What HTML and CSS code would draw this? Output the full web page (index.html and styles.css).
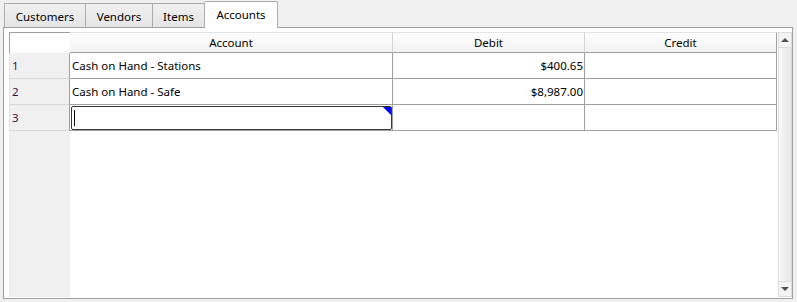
FILE: index.html
```html
<!DOCTYPE html>
<html lang="en">
<head>
<meta charset="utf-8">
<title>Accounts</title>
<link rel="stylesheet" href="styles.css">
</head>
<body>
<div class="window">
  <div class="tabstrip">
    <div class="tab tab-customers">Customers</div>
    <div class="tab tab-vendors">Vendors</div>
    <div class="tab tab-items">Items</div>
    <div class="tab tab-accounts selected">Accounts</div>
  </div>
  <div class="pane">
    <div class="grid">
      <div class="corner"></div>
      <div class="colhead">Account</div>
      <div class="colhead">Debit</div>
      <div class="colhead last">Credit</div>

      <div class="rowhead">1</div>
      <div class="cell">Cash on Hand - Stations</div>
      <div class="cell num">$400.65</div>
      <div class="cell"></div>

      <div class="rowhead">2</div>
      <div class="cell">Cash on Hand - Safe</div>
      <div class="cell num">$8,987.00</div>
      <div class="cell"></div>

      <div class="rowhead">3</div>
      <div class="cell editing"><div class="editor"><span class="caret"></span><span class="corner-mark"></span></div></div>
      <div class="cell"></div>
      <div class="cell"></div>

      <div class="rowfill"></div>
      <div class="emptyfill"></div>
    </div>
    <div class="vscroll">
      <div class="sbtn up"><span class="arrow-up"></span></div>
      <div class="track"></div>
      <div class="sbtn down"><span class="arrow-down"></span></div>
    </div>
  </div>
</div>
</body>
</html>
```
FILE: styles.css
```css
html, body {
  margin: 0;
  padding: 0;
  background: #f0f0f0;
}
body {
  width: 797px;
  height: 302px;
  overflow: hidden;
  font-family: "Segoe UI", "Noto Sans", sans-serif;
  font-size: 11.5px;
  color: #000;
}
.window {
  padding-left: 3px;
}
.tabstrip {
  display: flex;
  align-items: flex-end;
  height: 27px;
  padding-left: 1px;
}
.tab {
  box-sizing: border-box;
  height: 24px;
  border: 1px solid #acacac;
  border-bottom: none;
  margin-left: -1px;
  background: linear-gradient(#f0f0f0, #e5e5e5);
  display: flex;
  align-items: center;
  justify-content: center;
  padding-top: 1px;
  color: #000;
}
.tab:first-child { margin-left: 0; }
.tab-customers { width: 82px; }
.tab-vendors { width: 68px; }
.tab-items { width: 53px; }
.tab-accounts { width: 74px; }
.tab.selected {
  position: relative;
  z-index: 1;
  height: 27px;
  margin-bottom: -1px;
  background: #fff;
  padding-top: 0;
  padding-bottom: 2px;
  border-radius: 2px 2px 0 0;
}
.pane {
  box-sizing: border-box;
  width: 790px;
  height: 272px;
  border: 1px solid #a0a0a0;
  background: #fff;
  padding: 4px 0 0 5px;
  display: flex;
}
.grid {
  display: grid;
  grid-template-columns: 61px 323px 192px 192px;
  grid-template-rows: 21px 26px 26px 26px 1fr;
  height: 265px;
}
.corner {
  border-top: 1px solid #a0a0a0;
  border-left: 1px solid #a0a0a0;
  background: #fff;
}
.colhead {
  box-sizing: border-box;
  background: linear-gradient(#fefefe, #f2f2f2);
  border-top: 1px solid #e3e3e3;
  border-bottom: 1px solid #a0a0a0;
  border-right: 1px solid #d5d5d5;
  display: flex;
  align-items: center;
  justify-content: center;
  padding-bottom: 1px;
}
.colhead.last { border-right-color: #a0a0a0; }
.rowhead {
  box-sizing: border-box;
  background: #f0f0f0;
  border-left: 1px solid #e2e2e2;
  border-bottom: 1px solid #d8d8d8;
  border-right: 1px solid #a0a0a0;
  color: #3e1050;
  padding-left: 2px;
  display: flex;
  align-items: center;
}
.cell {
  box-sizing: border-box;
  border-right: 1px solid #a0a0a0;
  border-bottom: 1px solid #a0a0a0;
  padding: 0 2px;
  display: flex;
  align-items: center;
  white-space: nowrap;
}
.cell.num {
  justify-content: flex-end;
  padding-right: 1px;
}
.cell.editing {
  padding: 0 0 0 1px;
  align-items: stretch;
}
.editor {
  position: relative;
  flex: 1;
  box-sizing: border-box;
  border: 1px solid #383838;
  border-radius: 2px;
  background: #fff;
  margin-top: 1px;
  display: flex;
  align-items: center;
  padding-left: 2px;
}
.caret {
  width: 1px;
  height: 16px;
  background: #000;
}
.corner-mark {
  position: absolute;
  top: 0;
  right: 0;
  width: 0;
  height: 0;
  border-top: 8px solid #0000f0;
  border-left: 8px solid transparent;
}
.rowfill {
  background: #f0f0f0;
  border-left: 1px solid #f0f0f0;
}
.emptyfill {
  grid-column: 2 / 5;
  background: #fff;
}
.vscroll {
  box-sizing: border-box;
  width: 15px;
  height: 265px;
  margin-left: 1px;
  border: 1px solid #dcdcdc;
  display: flex;
  flex-direction: column;
  background: linear-gradient(90deg, #fafafa, #f0f0f0 40%, #e8e8e8);
}
.sbtn {
  height: 14px;
  flex: none;
  display: flex;
  align-items: center;
  justify-content: center;
  background: #f4f4f4;
}
.sbtn.up { border-bottom: 1px solid #dcdcdc; }
.sbtn.down { border-top: 1px solid #dcdcdc; }
.track { flex: 1; }
.arrow-up {
  width: 0; height: 0;
  border-left: 4px solid transparent;
  border-right: 4px solid transparent;
  border-bottom: 4px solid #505050;
}
.arrow-down {
  width: 0; height: 0;
  border-left: 4px solid transparent;
  border-right: 4px solid transparent;
  border-top: 4px solid #505050;
}
```
